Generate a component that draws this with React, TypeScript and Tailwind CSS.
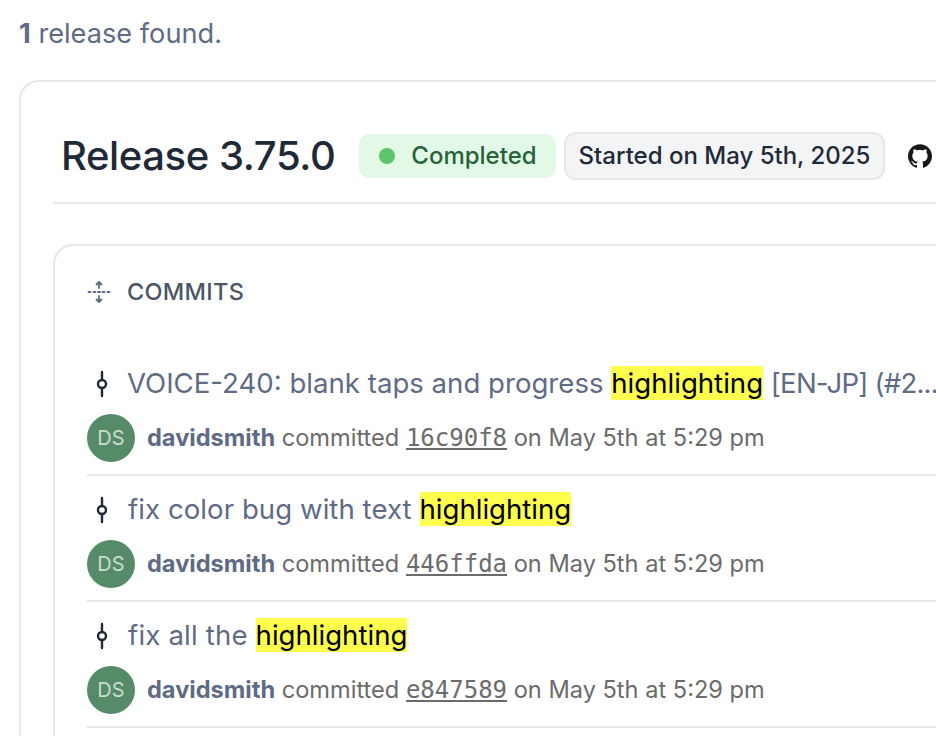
import type { ReactNode } from 'react';
import { SiGithub } from 'react-icons/si';

function Mark({ children }: { children: ReactNode }) {
  return <mark className="bg-[#ffff4d] text-black">{children}</mark>;
}

const commits = [
  {
    hash: '16c90f8',
    title: (
      <>
        VOICE-240: blank taps and progress <Mark>highlighting</Mark>{' '}
        <span className="tracking-[-0.8px]">[EN-JP] (#2...</span>
      </>
    ),
  },
  {
    hash: '446ffda',
    title: <span className="ml-px"><span className="tracking-[0.05px]">fix color bug with text </span><Mark>highlighting</Mark></span>,
  },
  {
    hash: 'e847589',
    title: <span className="ml-px"><span className="tracking-[0.17px]">fix all the </span><Mark>highlighting</Mark></span>,
  },
];

function CommitIcon() {
  return (
    <svg className="w-[30px] h-[30px] shrink-0 text-[#1f2937]" viewBox="0 0 30 30" fill="none" stroke="currentColor" strokeWidth={2.4} strokeLinecap="round">
      <circle cx="15" cy="15" r="4" />
      <path d="M15 3v8M15 19v8" />
    </svg>
  );
}

function ExpandIcon() {
  return (
    <svg className="w-6 h-6 shrink-0 text-[#5f6b85]" viewBox="0 0 24 24" fill="none" stroke="currentColor" strokeWidth={1.8} strokeLinecap="round" strokeLinejoin="round">
      <path d="M12 8V2M9.5 4.5 12 2l2.5 2.5M12 16v6M9.5 19.5 12 22l2.5-2.5" />
      <path d="M1.5 12h2M6.5 12h2M11 12h2M15.5 12h2M20.5 12h2" />
    </svg>
  );
}

export default function App() {
  return (
    <div className="h-[736px] w-[936px] overflow-hidden bg-white font-['Inter',sans-serif]">
      <p className="pl-[19px] pt-[16px] text-[27.2px] leading-[36px] text-[#5f6b85]">
        <span className="font-bold">1</span> release found.
      </p>
      <div className="mt-[28px] ml-[19px] w-[1100px] rounded-[20px] border-2 border-[#e5e7eb] px-[32px] pb-[40px] pt-[50px]">
        <div className="flex items-center border-b-2 border-[#e5e7eb] pb-[22px] pl-[8px]">
          <h2 className="text-[40px] leading-[46px] font-medium text-[#1f2937] tracking-[-0.4px]">Release 3.75.0</h2>
          <span className="ml-[24px] flex h-[44px] items-center gap-[16px] rounded-[10px] pl-[20px] pr-[19px] bg-[#e2f9e8] text-[24px] font-medium text-[#27633a]">
            <span className="h-4 w-4 rounded-full bg-[#5cc469]" />
            Completed
          </span>
          <span className="ml-[8px] flex h-[48px] items-center rounded-[12px] border-2 border-[#e5e7eb] bg-[#f3f4f6] px-[13px] text-[24px] font-medium text-[#1f2937]">
            Started on May 5th, 2025
          </span>
          <SiGithub className="ml-[23px] h-6 w-6 text-[#18181b]" />
        </div>
        <div className="mt-[40px] rounded-[20px] border-2 border-[#e5e7eb] px-[32px] pb-[40px] pt-[32px]">
          <div className="flex items-center gap-[16px]">
            <ExpandIcon />
            <span className="text-[23.5px] leading-[28px] font-medium tracking-[0.3px] text-[#4b5563]">COMMITS</span>
          </div>
          <div className="mt-[44px] w-[856px]">
            {commits.map((c) => (
              <div key={c.hash} className="flex h-[126px] flex-col border-b-2 border-[#e5e7eb] pt-[16px]">
                <div className="flex h-[36px] items-center gap-[10px] text-[27.6px] text-[#5f6b85]">
                  <CommitIcon />
                  <span className="whitespace-nowrap">{c.title}</span>
                </div>
                <div className="mt-[12px] flex items-center gap-[12px] text-[23.6px] text-[#6b6b6b]">
                  <span className="flex h-12 w-12 shrink-0 items-center justify-center rounded-full bg-[#558b68] text-[20px] text-[#c9dccf]">DS</span>
                  <span>
                    <span className="font-bold text-[#5f6b85]">davidsmith</span> committed{' '}
                    <span className="font-['DejaVu_Sans_Mono',monospace] text-[24px] underline">{c.hash}</span> on May 5th at 5:29 pm
                  </span>
                </div>
              </div>
            ))}
          </div>
        </div>
      </div>
    </div>
  );
}
